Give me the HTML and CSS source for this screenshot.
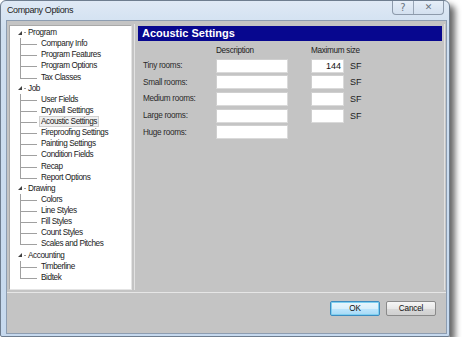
FILE: index.html
```html
<!DOCTYPE html>
<html lang="en">
<head>
<meta charset="UTF-8">
<title>Company Options</title>
<link rel="stylesheet" href="styles.css">
</head>
<body>
  <div class="window">
    <div class="titlebar">
      <span class="title">Company Options</span>
      <div class="caption-buttons">
        <span class="cap help">?</span>
        <span class="cap close">&#x2715;</span>
      </div>
    </div>
    <div class="client">
      <div class="main">
        <div class="tree">
          <div class="node root"><span class="twisty"></span><span class="dash"></span>Program</div>
          <div class="group">
            <div class="node leaf">Company Info</div>
            <div class="node leaf">Program Features</div>
            <div class="node leaf">Program Options</div>
            <div class="node leaf">Tax Classes</div>
          </div>
          <div class="node root"><span class="twisty"></span><span class="dash"></span>Job</div>
          <div class="group">
            <div class="node leaf">User Fields</div>
            <div class="node leaf">Drywall Settings</div>
            <div class="node leaf"><span class="selected">Acoustic Settings</span></div>
            <div class="node leaf">Fireproofing Settings</div>
            <div class="node leaf">Painting Settings</div>
            <div class="node leaf">Condition Fields</div>
            <div class="node leaf">Recap</div>
            <div class="node leaf">Report Options</div>
          </div>
          <div class="node root"><span class="twisty"></span><span class="dash"></span>Drawing</div>
          <div class="group">
            <div class="node leaf">Colors</div>
            <div class="node leaf">Line Styles</div>
            <div class="node leaf">Fill Styles</div>
            <div class="node leaf">Count Styles</div>
            <div class="node leaf">Scales and Pitches</div>
          </div>
          <div class="node root"><span class="twisty"></span><span class="dash"></span>Accounting</div>
          <div class="group">
            <div class="node leaf">Timberline</div>
            <div class="node leaf">Bidtek</div>
          </div>
        </div>
        <div class="panel">
          <div class="panel-header">Acoustic Settings</div>
          <div class="form">
            <span></span>
            <span class="col-head">Description</span>
            <span class="col-head">Maximum size</span>
            <span></span>

            <label class="row-label">Tiny rooms:</label>
            <div class="field desc"></div>
            <div class="field size">144</div>
            <span class="unit">SF</span>

            <label class="row-label">Small rooms:</label>
            <div class="field desc"></div>
            <div class="field size"></div>
            <span class="unit">SF</span>

            <label class="row-label">Medium rooms:</label>
            <div class="field desc"></div>
            <div class="field size"></div>
            <span class="unit">SF</span>

            <label class="row-label">Large rooms:</label>
            <div class="field desc"></div>
            <div class="field size"></div>
            <span class="unit">SF</span>

            <label class="row-label">Huge rooms:</label>
            <div class="field desc"></div>
          </div>
        </div>
      </div>
      <div class="footer">
        <button class="button default">OK</button>
        <button class="button">Cancel</button>
      </div>
    </div>
  </div>
</body>
</html>
```

FILE: styles.css
```css
body {
  margin: 0;
  background: #fff;
  font-family: "Liberation Sans", Arial, sans-serif;
}

.window {
  width: 450px;
  height: 337px;
  box-sizing: border-box;
  border: 1px solid #6e7d8f;
  border-radius: 6px 6px 2px 2px;
  background: linear-gradient(180deg, #dfe9f5 0, #cfdff0 30px, #c6d9ee 100%);
  box-shadow: 5px 5px 6px rgba(0, 0, 0, 0.6);
  padding: 0 2px 2px 5px;
  display: flex;
  flex-direction: column;
}

.titlebar {
  height: 19px;
  display: flex;
  align-items: flex-start;
}

.title {
  font-size: 9px;
  letter-spacing: -0.4px;
  color: #1e1e1e;
  margin: 4px 0 0 1px;
}

.caption-buttons {
  margin-left: auto;
  margin-right: 3px;
  display: flex;
  height: 13px;
  border: 1px solid #8d9aab;
  border-top: none;
  border-radius: 0 0 4px 4px;
  background: linear-gradient(180deg, #e6eef8, #d3e0ef);
}

.cap {
  font-family: "DejaVu Sans", sans-serif;
  color: #6a7380;
  line-height: 13px;
  text-align: center;
}

.help {
  width: 20px;
  font-size: 10px;
  border-right: 1px solid #98a5b5;
}

.close {
  width: 29px;
  font-size: 9px;
  font-weight: bold;
}

.client {
  flex: 1;
  background: #c4c4c4;
  border: 1px solid #8d9db1;
  display: flex;
  flex-direction: column;
}

.main {
  flex: 1;
  display: flex;
  gap: 2px;
  padding: 4px 1px 2px 2px;
  min-height: 0;
}

.tree {
  width: 123px;
  box-sizing: border-box;
  background: #fff;
  border: 1px solid #a9a9a9;
  border-right-color: #e4e4e4;
  border-bottom-color: #e4e4e4;
  padding-top: 1px;
  font-size: 8.2px;
  letter-spacing: -0.4px;
  color: #1a1a1a;
}

.node {
  height: 11.14px;
  line-height: 11px;
  white-space: nowrap;
  position: relative;
}

.root {
  padding-left: 8px;
  display: flex;
  align-items: center;
}

.twisty {
  width: 0;
  height: 0;
  border-left: 4px solid transparent;
  border-bottom: 4px solid #404040;
  margin-right: 2px;
}

.dash {
  width: 2px;
  border-top: 1px solid #9a9a9a;
  margin-right: 2px;
}

.group {
  margin-left: 10px;
}

.leaf {
  padding-left: 21px;
}

.leaf::before {
  content: "";
  position: absolute;
  left: 0;
  top: 6px;
  width: 17px;
  border-top: 1px solid #a0a0a0;
}

.leaf::after {
  content: "";
  position: absolute;
  left: 0;
  top: 0;
  bottom: 0;
  border-left: 1px solid #a0a0a0;
}

.leaf:last-child::after {
  bottom: 5px;
}

.selected {
  background: #f0f0f0;
  border: 1px solid #d0d0d0;
  margin-left: -2px;
  padding: 0 1px;
}

.panel {
  flex: 1;
  margin-top: -1px;
  border-left: 1px solid #e2e2e2;
  border-right: 1px solid #e2e2e2;
  padding: 2px 2px 0 3px;
}

.panel-header {
  height: 15px;
  background: #07078f;
  color: #fff;
  font-weight: bold;
  font-size: 11px;
  line-height: 15px;
  padding-left: 4px;
}

.form {
  display: grid;
  grid-template-columns: 73px 95px 39px auto;
  grid-template-rows: 11px repeat(5, 14px);
  row-gap: 2.67px;
  padding: 4px 0 0 5px;
  font-size: 8.2px;
  letter-spacing: -0.3px;
  color: #222;
  align-items: center;
}

.col-head {
  white-space: nowrap;
}

.row-label {
  color: #2a2a2a;
}

.field {
  height: 14px;
  box-sizing: border-box;
  background: #fff;
  border: 1px solid #dadada;
  border-top-color: #cfcfcf;
  border-left-color: #cfcfcf;
  font-size: 9px;
  letter-spacing: 0;
  line-height: 12px;
  text-align: right;
  padding-right: 2px;
  color: #111;
}

.desc {
  width: 72px;
}

.size {
  width: 33px;
}

.unit {
  font-size: 9px;
  letter-spacing: 0;
  color: #222;
}

.footer {
  height: 32px;
  border-top: 1px solid #e6e6e6;
  display: flex;
  justify-content: flex-end;
  align-items: flex-start;
  gap: 6px;
  padding: 8px 10px 0 0;
}

.button {
  width: 50px;
  height: 15px;
  padding: 0;
  font-family: "Liberation Sans", Arial, sans-serif;
  font-size: 8.2px;
  letter-spacing: -0.2px;
  color: #111;
  border: 1px solid #8a8a8a;
  border-radius: 2px;
  background: linear-gradient(180deg, #f6f6f6 0, #e8e8e8 50%, #d9d9d9 51%, #d0d0d0 100%);
}

.button.default {
  border-color: #3c8bc0;
  box-shadow: inset 0 0 0 1px #7fd0f0;
  background: linear-gradient(180deg, #eaf6fd 0, #d9f0fc 50%, #bee6fd 51%, #a7d9f5 100%);
}
```
